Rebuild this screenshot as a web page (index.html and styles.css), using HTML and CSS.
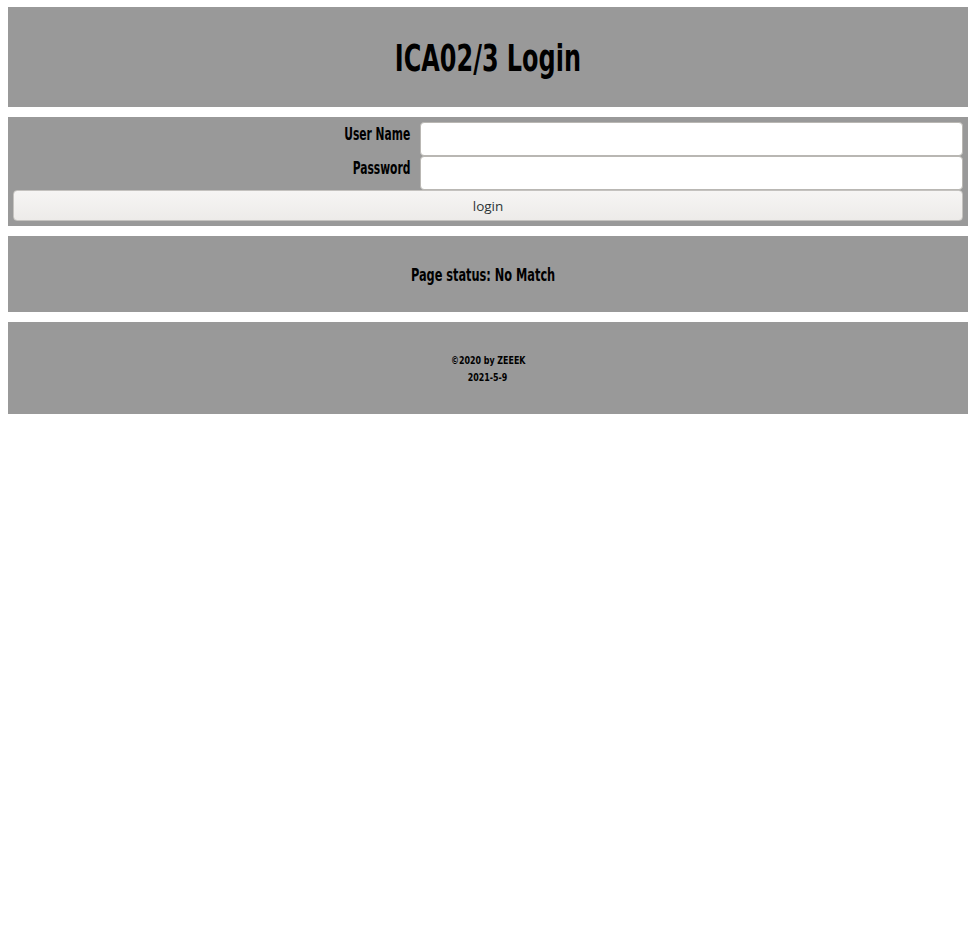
FILE: index.html
```html
<!DOCTYPE html>
<html>
<head>
<meta charset="utf-8">
<link rel="stylesheet" href="styles.css">
</head>
<body>
<div class="page">
  <header class="box header"><h1 class="title"><span class="narrow">ICA02/3 Login</span></h1></header>
  <form class="box login" onsubmit="return false">
    <label class="label" for="user"><span class="narrow right">User Name</span></label>
    <input class="field" id="user" type="text">
    <label class="label" for="pass"><span class="narrow right">Password</span></label>
    <input class="field" id="pass" type="password">
    <button class="btn" type="button">login</button>
  </form>
  <section class="box status"><h3 class="status-text"><span class="narrow">Page status: No Match</span></h3></section>
  <footer class="box footer">
    <div class="foot-line"><span class="narrow foot">©2020 by ZEEEK</span></div>
    <div class="foot-line"><span class="narrow foot">2021-5-9</span></div>
  </footer>
</div>
</body>
</html>
```
FILE: styles.css
```css
body {
  margin: 7px 8px 8px;
  font-family: "DejaVu Sans Condensed", "DejaVu Sans", sans-serif;
  font-stretch: condensed;
  color: #000;
  background: #fff;
}
.page {
  display: flex;
  flex-direction: column;
  gap: 10px;
}
.box {
  background: #999999;
}
.narrow {
  display: inline-block;
  transform: scaleX(0.70);
  transform-origin: center;
}
.narrow.right {
  transform-origin: right center;
}
.narrow.foot {
  transform: scaleX(0.88);
}
.header {
  height: 100px;
  display: flex;
  align-items: center;
  justify-content: center;
}
.title {
  margin: 0;
  font-size: 38px;
  font-weight: bold;
  line-height: 44px;
  padding-top: 2px;
}
.login {
  display: grid;
  grid-template-columns: 397px 1fr;
  column-gap: 10px;
  padding: 5px;
  margin: 0;
}
.label {
  text-align: right;
  font-weight: bold;
  font-size: 17px;
  line-height: 24px;
}
.field {
  box-sizing: border-box;
  height: 34px;
  border: 1px solid #b9b7b3;
  border-radius: 4px;
  background: #fff;
  margin: 0;
}
.btn {
  grid-column: 1 / 3;
  height: 31px;
  margin: 0;
  border: 1px solid #c4c2bf;
  border-radius: 4px;
  background: linear-gradient(#f6f5f4, #edebe9);
  font-family: "Open Sans", "Noto Sans", sans-serif;
  font-stretch: normal;
  font-size: 13.5px;
  color: #2e3436;
}
.status {
  height: 76px;
  display: flex;
  align-items: center;
  justify-content: center;
  padding-right: 9px;
}
.status-text {
  margin: 0;
  font-size: 18px;
  font-weight: bold;
}
.footer {
  height: 92px;
  display: flex;
  flex-direction: column;
  align-items: center;
  justify-content: center;
  padding-top: 2px;
  box-sizing: border-box;
}
.foot-line {
  font-size: 10px;
  font-weight: bold;
  line-height: 17px;
}
```
